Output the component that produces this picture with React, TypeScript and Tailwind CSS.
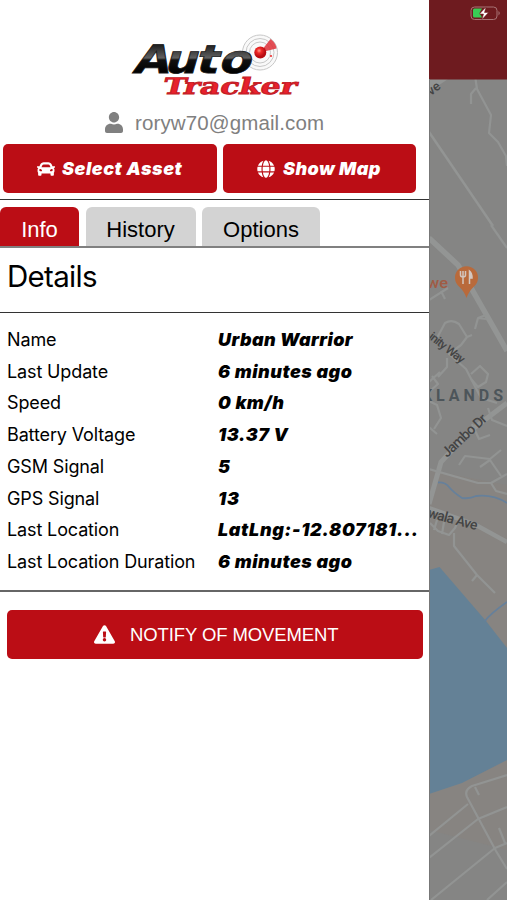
import { FaCar, FaExclamationTriangle, FaGlobe, FaUser } from 'react-icons/fa'

const details = [
  { label: 'Name', value: 'Urban Warrior', spacing: 'tracking-[0.4px]' },
  { label: 'Last Update', value: '6 minutes ago', spacing: 'tracking-[0.5px]' },
  { label: 'Speed', value: '0 km/h', spacing: 'tracking-[0.5px]' },
  { label: 'Battery Voltage', value: '13.37 V', spacing: 'tracking-[0.5px]' },
  { label: 'GSM Signal', value: '5', spacing: 'tracking-[0.1px]' },
  { label: 'GPS Signal', value: '13', spacing: 'tracking-[0.8px]' },
  { label: 'Last Location', value: 'LatLng:-12.807181...', spacing: 'tracking-[0.66px]' },
  { label: 'Last Location Duration', value: '6 minutes ago', spacing: 'tracking-[0.5px]' },
]

const tabs = [
  { label: 'Info', style: 'w-[79px] bg-[#bb0d15] text-white' },
  { label: 'History', style: 'w-[110px] bg-[#d3d3d3] text-black' },
  { label: 'Options', style: 'w-[118px] bg-[#d3d3d3] text-black' },
]

function Logo() {
  return (
    <svg viewBox="0 0 180 68" className="ml-[125px] h-[68px] w-[180px] shrink-0">
      <defs>
        <linearGradient id="ink" gradientUnits="userSpaceOnUse" x1="0" y1="-29" x2="0" y2="0">
          <stop offset="0" stopColor="#1a1a1a" />
          <stop offset="0.48" stopColor="#606060" />
          <stop offset="0.55" stopColor="#111" />
          <stop offset="1" stopColor="#000" />
        </linearGradient>
        <radialGradient id="ball" cx="0.4" cy="0.35">
          <stop offset="0" stopColor="#ff9a8a" />
          <stop offset="0.4" stopColor="#f02a28" />
          <stop offset="1" stopColor="#b80c12" />
        </radialGradient>
      </defs>
      <g fill="none" stroke="#c8c8c8" strokeWidth="1">
        <circle cx="135" cy="22.500" r="17.500" fill="#f9f9f9" />
        <circle cx="135" cy="22.500" r="14" />
        <circle cx="135" cy="22.500" r="10.500" />
      </g>
      <path d="M135 22.500 145.500 9Q151 13 151.500 18.500Z" fill="#df3038" opacity="0.85" />
      <text
        transform="translate(7 43) skewX(-16) scale(1.2 1)"
        x="0 26 52 71.500"
        className="font-['DejaVu_Sans'] text-[39px] font-bold"
        fill="url(#ink)"
        stroke="#151515"
        strokeWidth="0.8"
      >
        Auto
      </text>
      <circle cx="135.300" cy="22.500" r="6" fill="url(#ball)" />
      <circle cx="146" cy="26" r="1" fill="#e22" />
      <text
        transform="translate(36.500 64) skewX(-14)"
        textLength="134"
        lengthAdjust="spacingAndGlyphs"
        className="font-['DejaVu_Serif'] text-[22.500px] font-bold"
        fill="#e8212b"
        stroke="#c01c25"
        strokeWidth="0.900"
      >
        Tracker
      </text>
    </svg>
  )
}

function MapStrip() {
  return (
    <svg viewBox="429 0 78 900" className="h-[900px] w-[78px] shrink-0 bg-[#858584]">
      <path d="M429 470 507 485V850L429 830Z" fill="#878481" />

      {/* Lake and streams */}
      <path d="M429 570 439.500 567 486 621 507 648V760L462 783 429 794Z" fill="#648196" />
      <g fill="none" stroke="#66809b" strokeWidth="1.800">
        <path d="M438 482.500Q445 482 449 487T462 498Q470 499 476 496 493 494 507 503" />
        <path d="M485 621Q490 614 507 602" />
      </g>

      {/* Main roads */}
      <g fill="none" stroke="#939594">
        <path d="M429 79H448L429 92Z" fill="#929493" stroke="none" />
        <path d="M429 238 458 265 507 351" strokeWidth="5.500" />
        <path d="M429 504 441 462 470 431 507 403" strokeWidth="5" />
        <path d="M429 508 476 525 507 542" strokeWidth="4.500" />
        <path d="M429 132 493 226" strokeWidth="2.500" />
      </g>

      {/* Side streets */}
      <g fill="none" stroke="#929493" strokeWidth="2.200" strokeLinejoin="round">
        <path d="M475.500 79 477 89 491 115 489 133 498 142 506 156 507 166" />
        <path d="M471 104V94L476 88" />
        <path d="M429 300 448 288M441 291 445 299" />
        <path d="M437 338 445 323Q452 319 459 324L467 337 472 335M467 337 461 345 449 354 466 369 481 398 497 403" />
        <path d="M475 329 478 318 486 319M478 318 486 315" />
        <path d="M471 374 480 366 488 374 486 382 478 387 471 379" />
        <path d="M447 358V367L438 377M429 382 440 372M432 376 438 384 430 391" />
        <path d="M429 401 437 405 441 418 434 429M429 427 437 434" />
        <path d="M472 424 479 439 490 435M488 408 492 420 507 426" />
        <path d="M429 469 478 483 491 483 507 474M491 483 496 491 507 494" />
        <path d="M459 465 465 456 490 459 501 450M480 467 490 460 501 476" />
        <path d="M430 523 438 531 449 535 455 528 458 521M437 520 434 530M444 522 442 534" />
        <path d="M454 533V546L477 575 495 593M477 575 472 581" />
        <path d="M507 775 472 786Q464 790 467 797L496 851 507 869M475 787 479 795" />
        <path d="M429 836 468 804M429 858 478 819 507 807M431 900 495 848 507 843M499 828 505 843M487 900 507 882" />
        <path d="M491 225 507 248" />
      </g>

      {/* Labels */}
      <g className="font-['Roboto'] font-medium" fill="#444">
        <text transform="translate(431 96) rotate(-38)" className="text-[13px]">ve</text>
        <text transform="translate(428 338) rotate(38)" className="text-[12px]" textLength="42">inity Way</text>
        <text transform="translate(447 458) rotate(-43)" className="text-[14px]" textLength="56">Jambo Dr</text>
        <text transform="translate(427 517) rotate(15)" className="text-[14px]" textLength="51">wala Ave</text>
      </g>
      <text x="422" y="401" textLength="81" className="font-['Roboto'] text-[16px] font-bold" fill="#4d555a">
        KLANDS
      </text>
      <text x="427" y="288" textLength="21" lengthAdjust="spacingAndGlyphs" className="font-['Roboto'] text-[15px] font-medium" fill="#a05b44">
        we
      </text>

      {/* Restaurant pin */}
      <path d="M466.500 298Q464 291 459 286.500A11.500 11.500 0 1 1 474 286.500Q469 291 466.500 298Z" fill="#b96a3b" />
      <g fill="none" stroke="#d3c7c0" strokeWidth="1.500">
        <path d="M460.500 271V275Q460.500 277 463 277 465.500 277 465.500 275V271M463 271V284" />
        <path d="M469.500 284V271Q472 273 472 278H470" fill="#d3c7c0" />
      </g>

      {/* Header and battery */}
      <path d="M429 0H507V79.500H429Z" fill="#6e1b1f" />
      <rect x="471" y="7" width="26" height="12.500" rx="3.500" fill="none" stroke="#a87476" />
      <path d="M498.500 11Q501 13 498.500 15.500Z" fill="#a87476" />
      <path d="M474.500 8.500H482L479.500 13 482 17.500H474.500Q473 17.500 473 16V10Q473 8.500 474.500 8.500Z" fill="#39ce55" />
      <path d="M486 7 479.500 14H483.500L482 19.500 488.500 12.500H484.500Z" fill="#fff" stroke="#6e1b1f" strokeWidth="0.500" />
      <path d="M429.500 79V900" stroke="#777" />
    </svg>
  )
}

export default function App() {
  return (
    <div className="flex h-[900px] w-[507px] overflow-hidden bg-white font-['Inter',sans-serif] text-black">
      <aside className="flex w-[429px] shrink-0 flex-col">
        <div className="h-[30px] shrink-0" />
        <Logo />

        <div className="flex h-[46px] items-center pl-[105px] pt-[3px] text-[#808080]">
          <FaUser className="h-[21px] w-[18px]" preserveAspectRatio="none" />
          <span className="ml-[12px] mt-px whitespace-nowrap font-['Liberation_Sans',sans-serif] text-[20.5px] tracking-[0.12px]">
            roryw70@gmail.com
          </span>
        </div>

        <div className="flex h-[49px] shrink-0 gap-[6px] pl-[3px] text-[18px] font-black italic text-white">
          <button className="flex w-[214px] items-center rounded-[5px] bg-[#bb0d15] pl-[34px]">
            <FaCar className="size-[18px]" />
            <span className="ml-[7px] whitespace-nowrap tracking-[0.550px]">Select Asset</span>
          </button>
          <button className="flex w-[193px] items-center rounded-[5px] bg-[#bb0d15] pl-[34px]">
            <FaGlobe className="size-[18px]" />
            <span className="ml-[8px] whitespace-nowrap tracking-[0.4px]">Show Map</span>
          </button>
        </div>

        <nav className="mt-[6px] flex h-[49px] shrink-0 items-end gap-[6.500px] border-b-2 border-t border-b-[#808080] border-t-[#333] font-['Liberation_Sans',sans-serif] text-[22px]">
          {tabs.map((tab) => (
            <div key={tab.label} className={`flex h-[39px] items-center justify-center rounded-t-[6px] pt-[5px] ${tab.style}`}>
              {tab.label}
            </div>
          ))}
        </nav>

        <h1 className="flex h-[65px] shrink-0 items-start border-b border-[#333] pl-[7px] pt-[9px] text-[29.500px] leading-[38px] tracking-[-0.7px]">
          Details
        </h1>

        <dl className="h-[279px] shrink-0 border-b-2 border-[#666] pt-[10.500px] text-[18px]">
          {details.map((row) => (
            <div key={row.label} className="flex h-[31.750px] items-center pl-[7px]">
              <dt className="w-[211px] whitespace-nowrap tracking-[-0.130px]">{row.label}</dt>
              <dd className={`whitespace-nowrap font-black italic ${row.spacing}`}>{row.value}</dd>
            </div>
          ))}
        </dl>

        <button className="ml-[7px] mt-[18px] flex h-[49px] w-[416px] shrink-0 items-center rounded-[5px] bg-[#bb0d15] pl-[87px] font-['Liberation_Sans',sans-serif] text-[18.500px] tracking-[-0.100px] text-white">
          <FaExclamationTriangle className="size-[21px]" />
          <span className="ml-[15px] mt-px whitespace-nowrap">NOTIFY OF MOVEMENT</span>
        </button>
      </aside>
      <MapStrip />
    </div>
  )
}
